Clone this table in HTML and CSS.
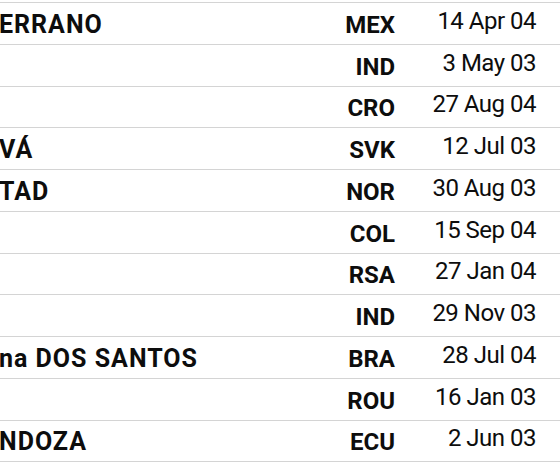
FILE: index.html
```html
<!DOCTYPE html>
<html lang="en">
<head>
<meta charset="utf-8">
<link rel="stylesheet" href="styles.css">
</head>
<body>
<div class="table">
  <div class="row"><span class="name">ERRANO</span><span class="code">MEX</span><span class="date">14 Apr 04</span></div>
  <div class="row"><span class="name"></span><span class="code">IND</span><span class="date">3 May 03</span></div>
  <div class="row"><span class="name"></span><span class="code">CRO</span><span class="date">27 Aug 04</span></div>
  <div class="row"><span class="name">VÁ</span><span class="code">SVK</span><span class="date">12 Jul 03</span></div>
  <div class="row"><span class="name">TAD</span><span class="code">NOR</span><span class="date">30 Aug 03</span></div>
  <div class="row"><span class="name"></span><span class="code">COL</span><span class="date">15 Sep 04</span></div>
  <div class="row"><span class="name"></span><span class="code">RSA</span><span class="date">27 Jan 04</span></div>
  <div class="row"><span class="name"></span><span class="code">IND</span><span class="date">29 Nov 03</span></div>
  <div class="row"><span class="name">na DOS SANTOS</span><span class="code">BRA</span><span class="date">28 Jul 04</span></div>
  <div class="row"><span class="name"></span><span class="code">ROU</span><span class="date">16 Jan 03</span></div>
  <div class="row"><span class="name">NDOZA</span><span class="code">ECU</span><span class="date">2 Jun 03</span></div>
</div>
</body>
</html>
```
FILE: styles.css
```css
html, body {
  margin: 0;
  padding: 0;
  background: #ffffff;
}
body {
  font-family: Roboto, "Noto Sans", sans-serif;
  color: #0d0d0d;
  overflow: hidden;
}
.table {
  padding-top: 2px;
}
.row {
  display: grid;
  grid-template-columns: 1fr auto 141px;
  align-items: center;
  height: 40.75px;
  border-top: 1px solid #d4d4d4;
  padding-right: 24px;
  font-size: 24px;
  line-height: 28px;
}
.row:last-child {
  border-bottom: 1px solid #d4d4d4;
}
.name {
  font-size: 25px;
  font-weight: 700;
  white-space: nowrap;
  padding-top: 3px;
  margin-left: -1px;
  letter-spacing: 1px;
}
.code {
  font-weight: 700;
  text-align: right;
  padding-top: 3px;
}
.date {
  font-weight: 400;
  text-align: right;
  padding-bottom: 5px;
  letter-spacing: -0.5px;
}
```
